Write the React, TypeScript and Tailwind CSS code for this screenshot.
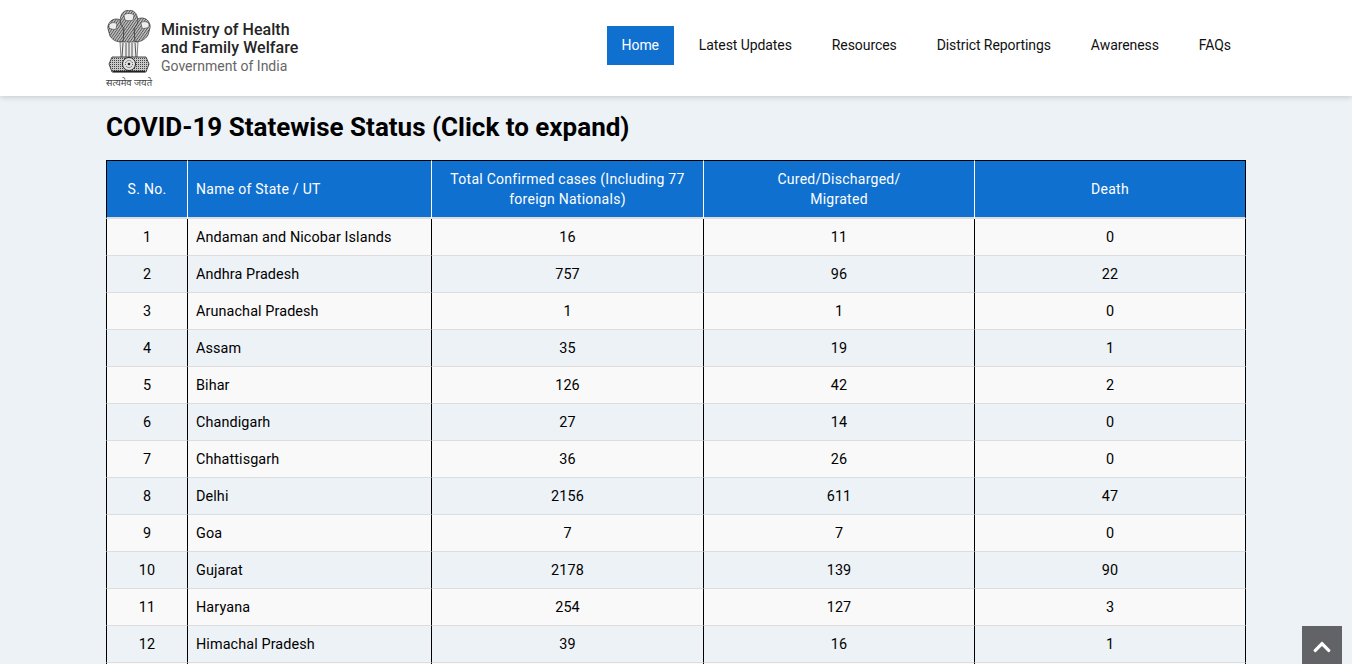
import { FaChevronUp } from "react-icons/fa";

const font = "font-['Roboto','Liberation_Sans',sans-serif]";

const navItems = ["Latest Updates", "Resources", "District Reportings", "Awareness", "FAQs"];

const rows = [
  ["1", "Andaman and Nicobar Islands", "16", "11", "0"],
  ["2", "Andhra Pradesh", "757", "96", "22"],
  ["3", "Arunachal Pradesh", "1", "1", "0"],
  ["4", "Assam", "35", "19", "1"],
  ["5", "Bihar", "126", "42", "2"],
  ["6", "Chandigarh", "27", "14", "0"],
  ["7", "Chhattisgarh", "36", "26", "0"],
  ["8", "Delhi", "2156", "611", "47"],
  ["9", "Goa", "7", "7", "0"],
  ["10", "Gujarat", "2178", "139", "90"],
  ["11", "Haryana", "254", "127", "3"],
  ["12", "Himachal Pradesh", "39", "16", "1"],
  ["", "", "", "", ""],
];

function Emblem() {
  return (
    <svg width="46" height="66" viewBox="0 0 46 66" className="block">
      <defs>
        <pattern id="mane" width="2.2" height="2.2" patternUnits="userSpaceOnUse" patternTransform="rotate(35)">
          <rect width="2.2" height="2.2" fill="#c4c4c4" />
          <rect width="0.9" height="2.2" fill="#555" />
        </pattern>
        <pattern id="band" width="2" height="2" patternUnits="userSpaceOnUse">
          <rect width="2" height="2" fill="#c9c9c9" />
          <rect width="1" height="1" fill="#444" />
        </pattern>
      </defs>
      {/* lions */}
      <g fill="url(#mane)" stroke="#333" strokeWidth="0.7">
        <path d="M2 19 C1 14 5 9 10 9 C14 9 17 11 17 15 L18 31 C13 33 7 31 4 26 Z" />
        <path d="M44 18 C45 13 41 8 36 8 C32 8 29 10 29 14 L28 31 C33 33 39 30 42 25 Z" />
        <path d="M15 6 C16 2 20 0 23 0 C26 0 30 2 31 6 C33 11 31 16 28 18 L29 33 H17 L18 18 C15 16 13 11 15 6 Z" />
      </g>
      <g fill="#eee" stroke="#222" strokeWidth="0.5">
        <path d="M18 5 C20 3 26 3 28 5 L27 10 C25 11 21 11 19 10 Z" />
        <path d="M3 15 C5 12 9 12 11 14 L10 19 C8 20 5 19 3 18 Z" />
        <path d="M43 14 C41 11 37 11 35 13 L36 18 C38 19 41 18 43 17 Z" />
      </g>
      {/* forelegs */}
      <path d="M14 32 H32 L31 48 H15 Z" fill="#ececec" stroke="#333" strokeWidth="0.6" />
      <path d="M17 33 L16 47 M20 33 V47 M23 32 V47 M26 33 V47 M29 33 L30 47" stroke="#555" strokeWidth="1" />
      {/* abacus */}
      <path d="M6 47 H40 L43 54 L40 62 H6 L3 54 Z" fill="url(#band)" stroke="#222" strokeWidth="0.8" />
      <path d="M7 61.5 H39" stroke="#222" strokeWidth="1.6" />
      <circle cx="23" cy="54" r="6.5" fill="#e4e4e4" stroke="#222" strokeWidth="1" />
      <circle cx="23" cy="54" r="3.6" fill="none" stroke="#333" strokeWidth="1" strokeDasharray="1 1" />
      <circle cx="23" cy="54" r="1.3" fill="#222" />
    </svg>
  );
}

export default function App() {
  return (
    <div className={`${font} h-[664px] overflow-hidden bg-[#edf2f7] relative`}>
      <header className="h-24 bg-white shadow-[0_1px_6px_rgba(0,0,0,0.18)] relative z-10">
        <div className="w-[1140px] mx-auto flex items-start justify-between">
          <div className="flex">
            <div className="w-[46px] mt-[10px] flex flex-col items-center">
              <Emblem />
              <div className="mt-[1px] text-[9.5px] leading-[12px] text-[#444] whitespace-nowrap font-['Noto_Sans','DejaVu_Sans',sans-serif]">सत्यमेव जयते</div>
            </div>
            <div className="ml-[9px] mt-[21px]">
              <div className="text-base leading-[18px] font-medium tracking-[0.05px] text-[#252525]">Ministry of Health</div>
              <div className="text-base leading-[18px] font-medium tracking-[0.05px] text-[#252525]">and Family Welfare</div>
              <div className="text-sm leading-[19px] text-[#666]">Government of India</div>
            </div>
          </div>
          <nav className="flex mt-[26px] mr-[-5px] text-sm tracking-[-0.08px]">
            <a className="h-[39px] pb-[2px] w-[67px] mr-[5px] flex items-center justify-center bg-[#0f70d0] text-white">Home</a>
            {navItems.map((item) => (
              <a key={item} className="h-[39px] pb-[2px] px-[20px] flex items-center text-[#111]">
                {item}
              </a>
            ))}
          </nav>
        </div>
      </header>

      <main className="w-[1140px] mx-auto">
        <h2 className="mt-[14px] mb-[16px] text-[26px] leading-[34px] font-bold text-black">COVID-19 Statewise Status (Click to expand)</h2>
        <table className="w-[1140px] table-fixed border-separate border-spacing-0 text-sm tracking-[0.27px]">
          <colgroup>
            <col className="w-[81px]" />
            <col className="w-[244px]" />
            <col className="w-[272px]" />
            <col className="w-[271px]" />
            <col className="w-[272px]" />
          </colgroup>
          <thead>
            <tr className="bg-[#0f70d0] text-white">
              <th className="h-[59px] font-normal text-center border-t border-l border-t-black border-l-black border-b-2 border-b-[#ddd]">S. No.</th>
              <th className="font-normal text-left pl-[8px] border-t border-l border-t-black border-l-white border-b-2 border-b-[#ddd]">Name of State / UT</th>
              <th className="font-normal text-center px-[8px] leading-5 border-t border-l border-t-black border-l-white border-b-2 border-b-[#ddd]">Total Confirmed cases (Including 77 foreign Nationals)</th>
              <th className="font-normal text-center leading-5 border-t border-l border-t-black border-l-white border-b-2 border-b-[#ddd]">Cured/Discharged/<br />Migrated</th>
              <th className="font-normal text-center border-t border-l border-r border-t-black border-l-white border-r-black border-b-2 border-b-[#ddd]">Death</th>
            </tr>
          </thead>
          <tbody className="text-black text-[14.4px] tracking-[0.1px]">
            {rows.map((r, i) => (
              <tr key={i} className={i % 2 === 0 ? "bg-[#f9f9f9]" : "bg-[#edf2f7]"}>
                <td className="h-[37px] pt-[2px] text-center border-l border-l-black border-b border-b-[#ddd]">{r[0]}</td>
                <td className="pt-[2px] pl-[8px] border-l border-l-black border-b border-b-[#ddd]">{r[1]}</td>
                <td className="pt-[2px] text-center border-l border-l-black border-b border-b-[#ddd]">{r[2]}</td>
                <td className="pt-[2px] text-center border-l border-l-black border-b border-b-[#ddd]">{r[3]}</td>
                <td className="pt-[2px] text-center border-l border-r border-l-black border-r-black border-b border-b-[#ddd]">{r[4]}</td>
              </tr>
            ))}
          </tbody>
        </table>
      </main>

      <div className="absolute right-[10px] bottom-0 w-10 h-[38px] bg-[#626366] flex justify-center pt-[11px] z-20">
        <FaChevronUp className="text-white w-5 h-5" />
      </div>
    </div>
  );
}
